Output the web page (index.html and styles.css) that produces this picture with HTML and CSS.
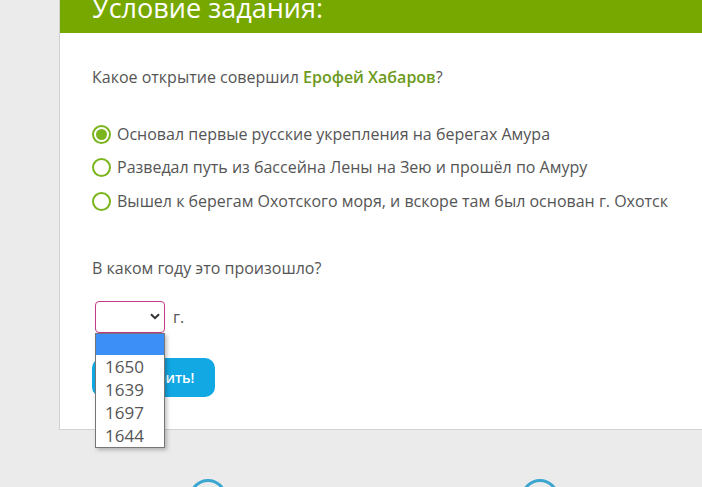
FILE: index.html
```html
<!DOCTYPE html>
<html lang="ru">
<head>
  <meta charset="UTF-8">
  <meta name="viewport" content="width=device-width, initial-scale=1.0">
  <title>Условие задания</title>
  <link rel="stylesheet" href="styles.css">
</head>
<body>
  <div class="page">
    <div class="task">
      <div class="task-head">
        <h2>Условие задания:</h2>
      </div>
      <div class="task-body">
        <p class="question">Какое открытие совершил <b class="hl">Ерофей Хабаров</b>?</p>
        <div class="answers">
          <label class="answer"><span class="radio checked"></span>Основал первые русские укрепления на берегах Амура</label>
          <label class="answer"><span class="radio"></span>Разведал путь из бассейна Лены на Зею и прошёл по Амуру</label>
          <label class="answer"><span class="radio"></span>Вышел к берегам Охотского моря, и вскоре там был основан г. Охотск</label>
        </div>
        <p class="question year-q">В каком году это произошло?</p>
        <div class="year-row">
          <div class="select">
            <svg class="chevron" width="10" height="7" viewBox="0 0 10 7"><path d="M1 1.2 L5 5.2 L9 1.2" fill="none" stroke="#333" stroke-width="2"/></svg>
            <ul class="options">
              <li class="active">&nbsp;</li>
              <li>1650</li>
              <li>1639</li>
              <li>1697</li>
              <li>1644</li>
            </ul>
          </div>
          <span class="unit">г.</span>
        </div>
        <button class="check-btn">Проверить!</button>
      </div>
    </div>
    <div class="nav">
      <span class="nav-circle"></span>
      <span class="nav-circle"></span>
    </div>
  </div>
</body>
</html>
```

FILE: styles.css
```css
body {
  margin: 0;
  background: #ebebeb;
  font-family: "Open Sans", Arial, sans-serif;
  color: #555;
  overflow: hidden;
}
.page {
  padding-left: 59px;
}
.task {
  width: 720px;
  background: #fff;
  border-left: 1px solid #d2d2d2;
  border-bottom: 1px solid #d2d2d2;
}
.task-head {
  height: 33px;
  background: #76a800;
  padding-left: 32px;
  overflow: hidden;
}
.task-head h2 {
  margin: -11px 0 0;
  font-size: 27px;
  font-weight: 400;
  line-height: normal;
  color: #fff;
}
.task-body {
  padding: 32px 32px 32px;
}
.question {
  margin: 0;
  font-size: 16px;
  line-height: 24px;
}
.hl {
  color: #6c9a1c;
  font-weight: 600;
}
.answers {
  margin-top: 28px;
}
.answer {
  display: flex;
  align-items: center;
  height: 33.5px;
  font-size: 16px;
  cursor: pointer;
}
.radio {
  width: 15px;
  height: 15px;
  border: 2px solid #7ab51d;
  border-radius: 50%;
  margin-right: 6px;
  margin-top: 1px;
  display: flex;
  align-items: center;
  justify-content: center;
}
.radio.checked::after {
  content: "";
  width: 11px;
  height: 11px;
  border-radius: 50%;
  background: #7ab51d;
}
.year-q {
  margin-top: 38px;
}
.year-row {
  display: flex;
  align-items: center;
  margin-top: 21px;
  margin-left: 3px;
}
.select {
  position: relative;
  width: 68px;
  height: 30px;
  border: 1px solid #c2388a;
  border-radius: 4px;
  display: flex;
  align-items: center;
  justify-content: flex-end;
}
.chevron {
  margin-right: 4px;
}
.options {
  position: absolute;
  top: 31px;
  left: -1px;
  width: 68px;
  margin: 0;
  padding: 0;
  list-style: none;
  background: #fff;
  border: 1px solid #767676;
  box-shadow: 2px 2px 4px rgba(0, 0, 0, 0.25);
  z-index: 2;
}
.options li {
  height: 23px;
  line-height: 23px;
  padding-left: 9px;
  font-size: 17px;
  color: #555;
}
.options li.active {
  height: 21px;
  background: #3c8ff7;
}
.unit {
  margin-left: 8px;
  font-size: 16px;
}
.check-btn {
  display: block;
  margin-top: 25px;
  width: 123px;
  height: 39px;
  border: none;
  border-radius: 10px;
  background: #12a8e4;
  color: #fff;
  font-family: "Open Sans", Arial, sans-serif;
  font-size: 14px;
  font-weight: 600;
}
.nav {
  display: flex;
  gap: 294px;
  padding: 49px 0 0 130px;
}
.nav-circle {
  width: 32px;
  height: 32px;
  border: 3px solid #3ba7d1;
  border-radius: 50%;
}
```
